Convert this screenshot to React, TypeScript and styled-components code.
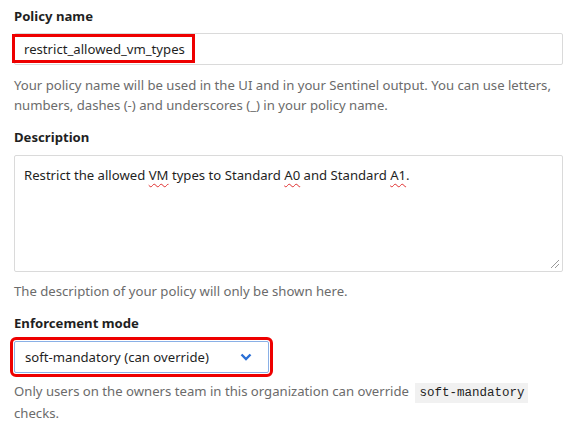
import React from "react";
import styled, { createGlobalStyle } from "styled-components";

const GlobalStyle = createGlobalStyle`
  html, body {
    margin: 0;
    padding: 0;
    background: #ffffff;
  }
  body {
    font-family: "Noto Sans", "Open Sans", sans-serif;
    font-size: 13.15px;
    color: #1f1f1f;
  }
`;

const Form = styled.div`
  width: 549px;
  padding: 6px 10px 0 14px;
`;

const Group = styled.div`
  margin-bottom: 12px;
`;

const Label = styled.div`
  font-weight: 700;
  line-height: 20px;
  margin-bottom: 8px;
  color: #1f1f1f;
`;

const Help = styled.p<{ $gap?: number }>`
  margin: ${(p) => p.$gap ?? 10}px 0 0;
  line-height: 20px;
  color: #6b6b6b;
`;

const Field = styled.div`
  position: relative;
  margin-top: -1px;
`;

const TextInput = styled.input`
  display: block;
  box-sizing: border-box;
  width: 100%;
  height: 32px;
  padding: 0 9px;
  border: 1px solid #dadada;
  border-radius: 2px;
  font: inherit;
  color: #1f1f1f;
  background: #fff;
  outline: none;
`;

// annotation box drawn over the input value
const Highlight = styled.span`
  position: absolute;
  left: -2px;
  top: 1px;
  width: 183px;
  height: 29px;
  box-sizing: border-box;
  border: 3px solid #ee0000;
  pointer-events: none;
`;

const TextArea = styled.div`
  position: relative;
  box-sizing: border-box;
  height: 117px;
  padding: 9px 9px;
  border: 1px solid #dadada;
  border-radius: 2px;
  line-height: 20px;
  color: #1f1f1f;
`;

const Misspelled = styled.span`
  text-decoration: underline wavy #e03030;
  text-decoration-thickness: 1px;
  text-underline-offset: 3px;
`;

const Grip = styled.svg`
  position: absolute;
  right: 2px;
  bottom: 2px;
`;

const Select = styled.div`
  box-sizing: border-box;
  width: 255px;
  height: 32px;
  padding: 0 10px;
  display: flex;
  align-items: center;
  justify-content: space-between;
  border: 1px solid #8ab0e6;
  border-radius: 2px;
  outline: 3px solid #ee0000;
  outline-offset: 1px;
  color: #1f1f1f;
`;

const Chevron = styled.svg`
  margin-right: 6px;
`;

const Code = styled.code`
  font-family: "Liberation Mono", "DejaVu Sans Mono", monospace;
  font-size: 12.5px;
  background: #f1f1f1;
  padding: 3px 4px;
  margin-left: 3px;
  color: #1f1f1f;
`;

export default function App() {
  return (
    <>
      <GlobalStyle />
      <Form>
        <Group>
          <Label>Policy name</Label>
          <Field>
            <TextInput readOnly value="restrict_allowed_vm_types" />
            <Highlight />
          </Field>
          <Help>
            Your policy name will be used in the UI and in your Sentinel output. You can use letters,
            numbers, dashes (-) and underscores (_) in your policy name.
          </Help>
        </Group>
        <Group>
          <Label>Description</Label>
          <TextArea>
            Restrict the allowed <Misspelled>VM</Misspelled> types to Standard <Misspelled>A0</Misspelled> and
            Standard <Misspelled>A1</Misspelled>.
            <Grip width="12" height="12" viewBox="0 0 12 12">
              <path d="M11 3 L3 11 M11 7 L7 11" stroke="#9a9a9a" strokeWidth="1" />
            </Grip>
          </TextArea>
          <Help $gap={9}>The description of your policy will only be shown here.</Help>
        </Group>
        <Group>
          <Label>Enforcement mode</Label>
          <Select>
            <span>soft-mandatory (can override)</span>
            <Chevron width="12" height="8" viewBox="0 0 12 8">
              <path d="M1.5 1.5 L6 6 L10.5 1.5" fill="none" stroke="#2a6fd6" strokeWidth="2.4" />
            </Chevron>
          </Select>
          <Help $gap={8}>
            Only users on the owners team in this organization can override <Code>soft-mandatory</Code>{" "}
            checks.
          </Help>
        </Group>
      </Form>
    </>
  );
}
